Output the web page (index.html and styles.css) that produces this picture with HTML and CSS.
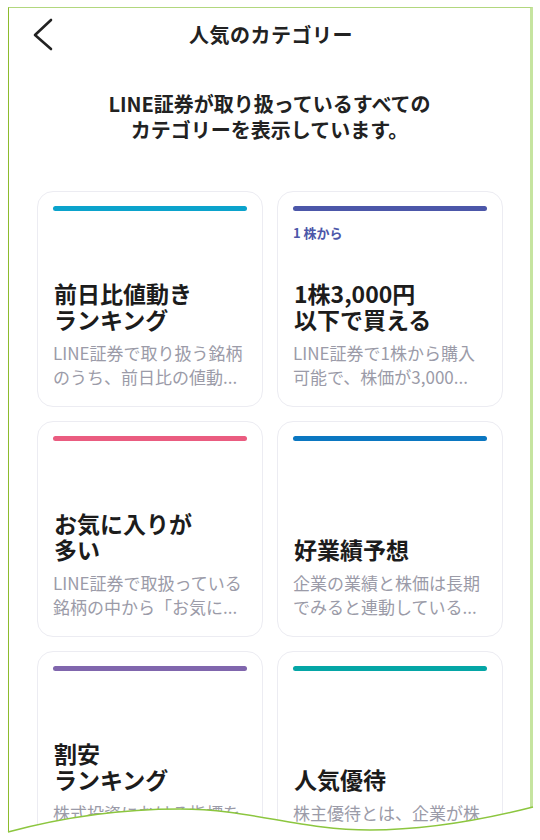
FILE: index.html
```html
<!DOCTYPE html>
<html lang="ja">
<head>
<meta charset="utf-8">
<title>人気のカテゴリー</title>
<link rel="stylesheet" href="styles.css">
</head>
<body>
<div class="frame">
  <header class="header">
    <div class="back">
      <svg width="22" height="34" viewBox="0 0 22 34"><polyline points="19,2 3,17 19,31" fill="none" stroke="#222" stroke-width="2.6" stroke-linecap="round" stroke-linejoin="round"/></svg>
    </div>
    <h1 class="title">人気のカテゴリー</h1>
    <div></div>
  </header>
  <p class="intro">LINE証券が取り扱っているすべての<br>カテゴリーを表示しています。</p>
  <div class="grid">
    <div class="card">
      <div class="bar bar-cyan"></div>
      <div class="body">
        <h2 class="card-title">前日比値動き<br>ランキング</h2>
        <p class="desc"><span>LINE証券で取り扱う銘柄</span><span>のうち、前日比の値動...</span></p>
      </div>
    </div>
    <div class="card">
      <div class="bar bar-indigo"></div>
      <div class="label">1 株から</div>
      <div class="body">
        <h2 class="card-title">1株3,000円<br>以下で買える</h2>
        <p class="desc"><span>LINE証券で1株から購入</span><span>可能で、株価が3,000...</span></p>
      </div>
    </div>
    <div class="card">
      <div class="bar bar-pink"></div>
      <div class="body">
        <h2 class="card-title">お気に入りが<br>多い</h2>
        <p class="desc"><span>LINE証券で取扱っている</span><span>銘柄の中から「お気に...</span></p>
      </div>
    </div>
    <div class="card">
      <div class="bar bar-blue"></div>
      <div class="body">
        <h2 class="card-title">好業績予想</h2>
        <p class="desc"><span>企業の業績と株価は長期</span><span>でみると連動している...</span></p>
      </div>
    </div>
    <div class="card">
      <div class="bar bar-purple"></div>
      <div class="body">
        <h2 class="card-title">割安<br>ランキング</h2>
        <p class="desc"><span>株式投資における指標を</span><span>用いて割安な銘柄を...</span></p>
      </div>
    </div>
    <div class="card">
      <div class="bar bar-teal"></div>
      <div class="body">
        <h2 class="card-title">人気優待</h2>
        <p class="desc"><span>株主優待とは、企業が株</span><span>主に対して自社製品...</span></p>
      </div>
    </div>
  </div>
</div>
<svg class="tear" width="540" height="840" viewBox="0 0 540 840">
  <path d="M0,832 L8,832 C60,818 120,809 180,809 C250,809 300,830 370,830 C430,830 490,818 533,807 L540,807 L540,840 L0,840 Z" fill="#fff"/>
  <path d="M8,832 C60,818 120,809 180,809 C250,809 300,830 370,830 C430,830 490,818 533,807" fill="none" stroke="#8cc63f" stroke-width="1.5"/>
</svg>
</body>
</html>
```

FILE: styles.css
```css
html, body {
  margin: 0;
  padding: 0;
  background: #fff;
  overflow: hidden;
  height: 840px;
}

body {
  font-family: "Noto Sans CJK JP", "Noto Sans", sans-serif;
  color: #222;
  position: relative;
}

.frame {
  margin: 7px 7px 0 8px;
  border-top: 1px solid #b2d77e;
  border-left: 1px solid #8dbb2c;
  border-right: 3px solid #c6e4a0;
  min-height: 900px;
  box-sizing: border-box;
}

.header {
  height: 54px;
  display: grid;
  grid-template-columns: 1fr auto 1fr;
  align-items: center;
}

.back {
  padding-left: 23px;
  display: flex;
  align-items: center;
}

.back svg {
  display: block;
}

.title {
  margin: 0 0 0 3px;
  font-size: 20px;
  font-weight: 700;
  line-height: 26px;
  letter-spacing: 0.5px;
  color: #222;
}

.intro {
  margin: 29px 0 0;
  text-align: center;
  font-size: 20px;
  line-height: 26px;
  font-weight: 700;
  color: #222;
}

.grid {
  margin-top: 48px;
  padding: 0 27px 0 28px;
  display: grid;
  grid-template-columns: 1fr 1fr;
  grid-auto-rows: 216px;
  column-gap: 14px;
  row-gap: 14px;
}

.card {
  border: 1px solid #ececf2;
  border-radius: 16px;
  padding: 14px 15px 17px;
  box-sizing: border-box;
  display: flex;
  flex-direction: column;
  background: #fff;
}

.bar {
  height: 5px;
  border-radius: 3px;
  flex: none;
}

.bar-cyan { background: #0ba3cc; }
.bar-indigo { background: #4c57a9; }
.bar-pink { background: #ea5c80; }
.bar-blue { background: #0b77c1; }
.bar-purple { background: #8066ad; }
.bar-teal { background: #05a6a6; }

.label {
  margin-top: 13px;
  font-size: 13px;
  line-height: 18px;
  font-weight: 700;
  color: #4c57a9;
}

.body {
  margin-top: auto;
}

.card-title {
  margin: 0;
  font-size: 23px;
  line-height: 26px;
  font-weight: 700;
  color: #1c1c1c;
  padding-left: 1px;
}

.desc {
  margin: 9px 0 0;
  font-size: 17px;
  line-height: 24px;
  color: #9b9ba8;
}

.desc span {
  display: block;
  white-space: nowrap;
  overflow: hidden;
}

.tear {
  position: absolute;
  left: 0;
  top: 0;
  pointer-events: none;
}
```
